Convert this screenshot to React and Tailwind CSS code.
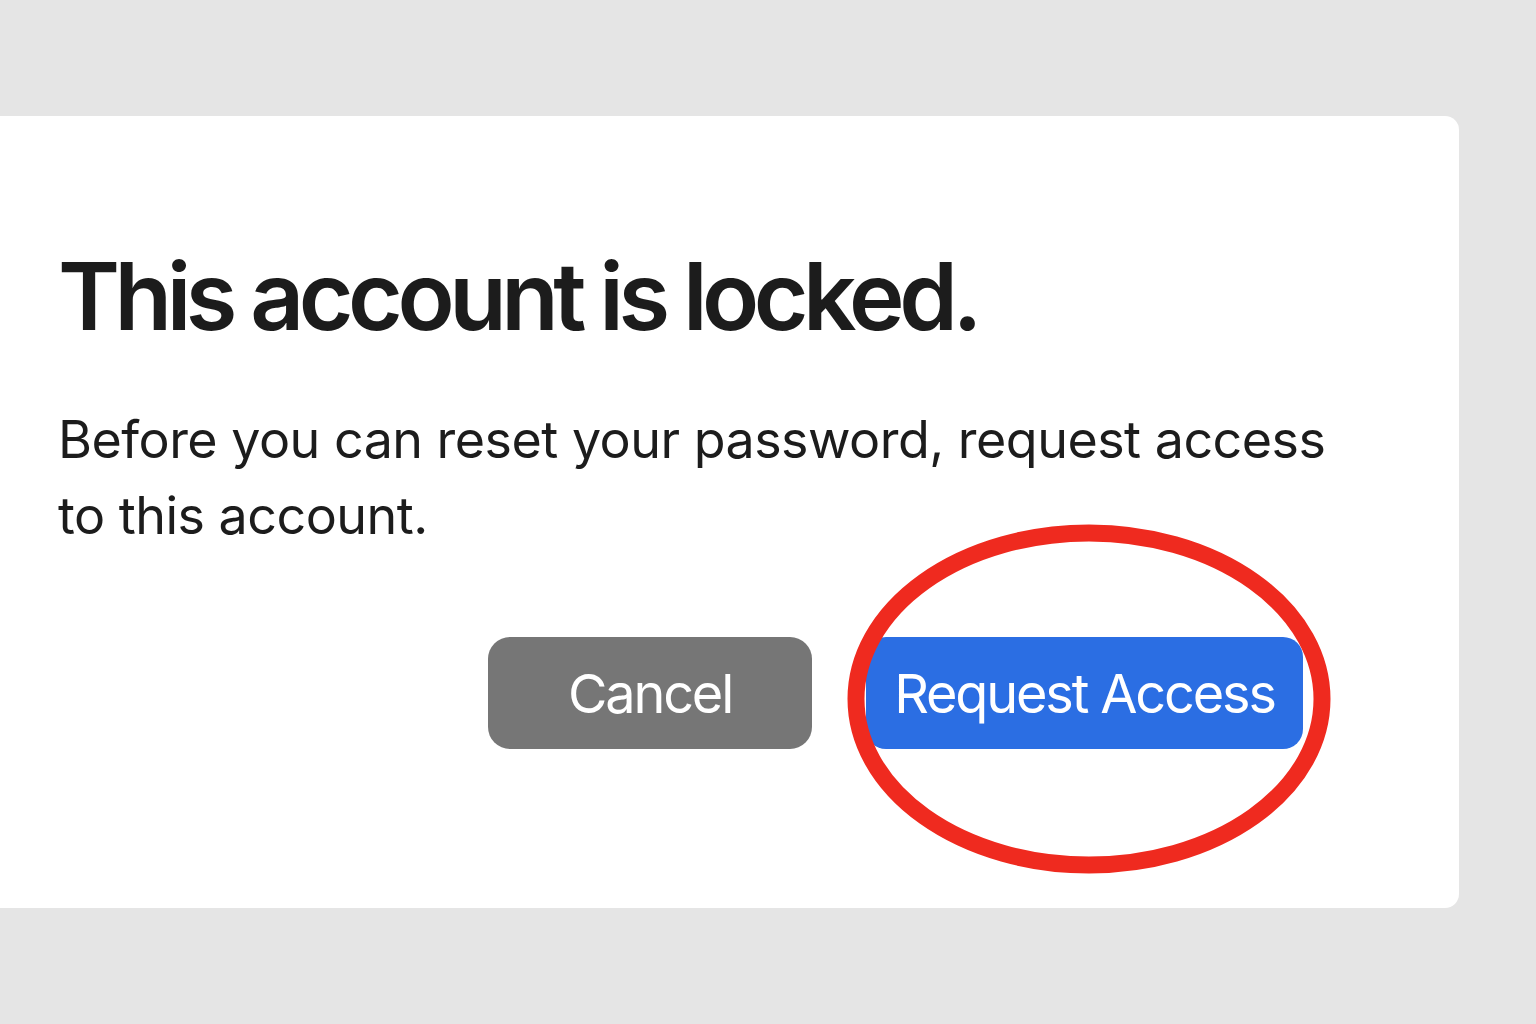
export default function App() {
  return (
    <div className="w-[1536px] h-[1024px] bg-[#e5e5e5] overflow-hidden pt-[116px]" style={{ fontFamily: 'Inter, "Noto Sans", sans-serif' }}>
      <div className="w-[1459px] h-[792px] bg-white rounded-r-[14px] pl-[58px] pr-[156px] pt-[132px] flex flex-col">
        <h1 className="text-[94px] leading-[96px] font-semibold text-[#1c1c1c] tracking-[-0.058em]">
          This account is locked.
        </h1>
        <p className="mt-[58px] w-[1300px] text-[52px] leading-[76px] text-[#1c1c1c] tracking-[-0.01em]">
          Before you can reset your password, request access to this account.
        </p>
        <div className="mt-[83px] flex justify-end gap-[54px]">
          <button className="w-[324px] h-[112px] rounded-[22px] bg-[#767676] text-white text-[54px] tracking-[-0.04em] flex items-center justify-center">
            Cancel
          </button>
          <div className="relative">
            <button className="w-[437px] h-[112px] rounded-[20px] bg-[#2b6ee3] text-white text-[54px] tracking-[-0.04em] flex items-center justify-center">
              Request Access
            </button>
            <svg className="absolute left-[-20px] top-[-114px] pointer-events-none" width="486" height="354" viewBox="0 0 486 354">
              <ellipse cx="243" cy="176" rx="233" ry="166" fill="none" stroke="#ef2a1f" strokeWidth="17" />
            </svg>
          </div>
        </div>
      </div>
    </div>
  );
}
